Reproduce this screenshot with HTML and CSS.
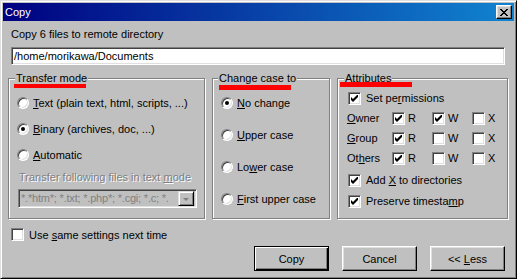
FILE: index.html
```html
<!DOCTYPE html>
<html lang="en">
<head>
  <meta charset="UTF-8" />
  <title>Copy</title>
  <link rel="stylesheet" href="styles.css">
</head>
<body>
  <svg width="0" height="0" class="defs">
    <symbol id="tick" viewBox="0 0 7 7">
      <path d="M0 2 L2 4 L6 0 L7 0 L7 2 L2 7 L0 5 Z" fill="#000"/>
    </symbol>
  </svg>

  <div class="window">
    <div class="titlebar">
      <span class="title">Copy</span>
      <span class="close-btn">
        <svg width="8" height="7" viewBox="0 0 8 7" shape-rendering="crispEdges">
          <path d="M0 0h2v1h1v1h2v-1h1v-1h2v1h-1v1h-1v1h-1v1h1v1h1v1h1v1h-2v-1h-1v-1h-2v1h-1v1h-2v-1h1v-1h1v-1h1v-1h-1v-1h-1v-1h-1z" fill="#000"/>
        </svg>
      </span>
    </div>

    <div class="content">
      <div class="prompt">Copy 6 files to remote directory</div>
      <div class="path-input">/home/morikawa/Documents</div>

      <div class="groups">
        <fieldset class="group group-transfer">
          <legend class="mark-transfer">Transfer mode</legend>
          <div class="option"><span class="radio"></span><span><u>T</u>ext (plain text, html, scripts, ...)</span></div>
          <div class="option"><span class="radio on"></span><span><u>B</u>inary (archives, doc, ...)</span></div>
          <div class="option"><span class="radio"></span><span><u>A</u>utomatic</span></div>
          <div class="disabled-label">Transfer following files in text <u>m</u>ode</div>
          <div class="combo">
            <span class="combo-text">*.*htm*; *.txt; *.php*; *.cgi; *.c; *.</span>
            <span class="combo-btn"><span class="arrow"></span></span>
          </div>
        </fieldset>

        <fieldset class="group group-case">
          <legend class="mark-case">Change case to</legend>
          <div class="case-list">
            <div class="option"><span class="radio on"></span><span><u>N</u>o change</span></div>
            <div class="option"><span class="radio"></span><span><u>U</u>pper case</span></div>
            <div class="option"><span class="radio"></span><span>Lo<u>w</u>er case</span></div>
            <div class="option"><span class="radio"></span><span><u>F</u>irst upper case</span></div>
          </div>
        </fieldset>

        <fieldset class="group group-attr">
          <legend class="mark-attr">Attributes</legend>
          <div class="check-row">
            <span class="check"><svg><use href="#tick"/></svg></span>
            <span>Set pe<u>r</u>missions</span>
          </div>
          <div class="perm-grid">
            <span class="perm-name"><u>O</u>wner</span>
            <span class="perm"><span class="check"><svg><use href="#tick"/></svg></span>R</span>
            <span class="perm"><span class="check"><svg><use href="#tick"/></svg></span>W</span>
            <span class="perm"><span class="check"></span>X</span>

            <span class="perm-name"><u>G</u>roup</span>
            <span class="perm"><span class="check"><svg><use href="#tick"/></svg></span>R</span>
            <span class="perm"><span class="check"></span>W</span>
            <span class="perm"><span class="check"></span>X</span>

            <span class="perm-name">Ot<u>h</u>ers</span>
            <span class="perm"><span class="check"><svg><use href="#tick"/></svg></span>R</span>
            <span class="perm"><span class="check"></span>W</span>
            <span class="perm"><span class="check"></span>X</span>
          </div>
          <div class="check-row add-x">
            <span class="check"><svg><use href="#tick"/></svg></span>
            <span>Add <u>X</u> to directories</span>
          </div>
          <div class="check-row keep-time">
            <span class="check"><svg><use href="#tick"/></svg></span>
            <span>Preserve timesta<u>m</u>p</span>
          </div>
        </fieldset>
      </div>

      <div class="check-row same-settings">
        <span class="check"></span>
        <span>Use <u>s</u>ame settings next time</span>
      </div>

      <div class="buttons">
        <span class="btn default"><span>Copy</span></span>
        <span class="btn"><span>Cancel</span></span>
        <span class="btn"><span>&lt;&lt; <u>L</u>ess</span></span>
      </div>
    </div>
  </div>
</body>
</html>
```

FILE: styles.css
```css
* {
  box-sizing: border-box;
}
body {
  margin: 0;
  background: #c0c0c0;
  font-family: "Liberation Sans", Arial, sans-serif;
  font-size: 11px;
  color: #000;
}
.defs {
  position: absolute;
}
u {
  text-underline-offset: 1px;
}
.window {
  width: 517px;
  height: 279px;
  background: #c0c0c0;
  border: 1px solid;
  border-color: #dfdfdf #000 #000 #dfdfdf;
  box-shadow: inset 1px 1px #fff, inset -1px -1px #808080;
  padding: 2px;
  display: flex;
  flex-direction: column;
}
.titlebar {
  height: 18px;
  flex-shrink: 0;
  background: linear-gradient(to right, #000080, #1084d0);
  display: flex;
  align-items: center;
  justify-content: space-between;
  padding: 0 2px;
  color: #fff;
}
.title {
  font-size: 11px;
}
.close-btn {
  width: 16px;
  height: 14px;
  background: #c0c0c0;
  border: 1px solid;
  border-color: #fff #000 #000 #fff;
  box-shadow: inset -1px -1px #808080, inset 1px 1px #dfdfdf;
  display: flex;
  align-items: center;
  justify-content: center;
}
.content {
  flex: 1;
  padding: 0 6px 0 5px;
  display: flex;
  flex-direction: column;
}
.prompt {
  margin-top: 7px;
  line-height: 13px;
  padding-left: 3px;
}
.path-input {
  margin: 6px 3px 0;
  height: 18px;
  background: #fff;
  border: 1px solid;
  border-color: #808080 #fff #fff #808080;
  box-shadow: inset 1px 1px #404040, inset -1px -1px #dfdfdf;
  padding: 1px 2px 0;
  line-height: 14px;
  white-space: nowrap;
}

/* group boxes */
.groups {
  margin-top: 7px;
  height: 147px;
  display: flex;
  gap: 7px;
}
.group {
  margin: 0;
  min-width: 0;
  border: 1px solid #808080;
  box-shadow: 1px 1px 0 #fff, inset 1px 1px 0 #fff;
  padding: 5px 8px 0;
}
.group legend {
  position: relative;
  padding: 0 1px;
  margin-left: -2px;
  line-height: 13px;
  background: #c0c0c0;
}
.group legend::after {
  content: "";
  position: absolute;
  width: 72px;
  height: 4px;
  background: #ff0000;
}
.mark-transfer::after {
  left: -1px;
  top: 12px;
}
.mark-case::after {
  left: 1px;
  top: 13px;
  height: 5px !important;
}
.mark-attr::after {
  left: -4px;
  top: 10px;
  height: 5px !important;
}
.group-transfer {
  width: 197px;
}
.group-case {
  width: 118px;
}
.group-case legend {
  margin-left: -3px;
}
.group-attr {
  flex: 1;
  padding: 3px 10px 0;
}
.group-attr legend {
  margin-left: -4px;
}

/* radio options */
.option {
  display: flex;
  align-items: center;
  gap: 4px;
  height: 26px;
  white-space: nowrap;
}
.case-list {
  display: flex;
  flex-direction: column;
  gap: 6px;
}
.radio {
  position: relative;
  flex-shrink: 0;
  width: 12px;
  height: 12px;
  border-radius: 50%;
  background: #fff;
  border: 1px solid;
  border-color: #808080 #fff #fff #808080;
  box-shadow: inset 1px 1px #404040, inset -1px -1px #dfdfdf;
}
.radio.on::after {
  content: "";
  position: absolute;
  left: 3px;
  top: 3px;
  width: 4px;
  height: 4px;
  border-radius: 50%;
  background: #000;
}
.disabled-label {
  margin-top: 3px;
  padding-left: 2px;
  line-height: 13px;
  color: #808080;
  text-shadow: 1px 1px 0 #fff;
  white-space: nowrap;
}
.combo {
  margin: 5px 0 0 1px;
  width: 179px;
  height: 19px;
  display: flex;
  align-items: center;
  border: 1px solid;
  border-color: #808080 #fff #fff #808080;
  box-shadow: inset 1px 1px #404040, inset -1px -1px #dfdfdf;
  padding: 2px;
}
.combo-text {
  flex: 1;
  overflow: hidden;
  white-space: nowrap;
  color: #808080;
  line-height: 13px;
  letter-spacing: -0.2px;
}
.combo-btn {
  width: 16px;
  height: 15px;
  flex-shrink: 0;
  background: #c0c0c0;
  border: 1px solid;
  border-color: #dfdfdf #000 #000 #dfdfdf;
  box-shadow: inset 1px 1px #fff, inset -1px -1px #808080;
  display: flex;
  align-items: center;
  justify-content: center;
}
.arrow {
  width: 0;
  height: 0;
  border-left: 3px solid transparent;
  border-right: 3px solid transparent;
  border-top: 3px solid #808080;
  margin-top: 2px;
}

/* checkboxes */
.check-row {
  display: flex;
  align-items: center;
  gap: 5px;
  height: 20px;
  white-space: nowrap;
}
.check {
  flex-shrink: 0;
  width: 13px;
  height: 13px;
  background: #fff;
  border: 1px solid;
  border-color: #808080 #fff #fff #808080;
  box-shadow: inset 1px 1px #404040, inset -1px -1px #dfdfdf;
  display: flex;
  align-items: center;
  justify-content: center;
}
.check svg {
  width: 7px;
  height: 7px;
}
.perm-grid {
  display: grid;
  grid-template-columns: 44px 40px 40px auto;
  grid-auto-rows: 20px;
  align-items: center;
  margin-left: -1px;
}
.perm {
  display: flex;
  align-items: center;
  gap: 3px;
  margin-left: 1px;
}
.add-x {
  margin-top: 2px;
}
.keep-time {
  margin-top: 1px;
}
.same-settings {
  margin-top: 9px;
  height: 13px;
  padding-left: 3px;
}

/* dialog buttons */
.buttons {
  margin-top: 5px;
  display: flex;
  justify-content: flex-end;
  gap: 13px;
  padding-right: 3px;
}
.btn {
  width: 75px;
  height: 25px;
  display: flex;
  align-items: center;
  justify-content: center;
  white-space: pre;
  background: #c0c0c0;
  border: 1px solid;
  border-color: #fff #000 #000 #fff;
  box-shadow: inset -1px -1px #808080, inset 1px 1px #dfdfdf;
}
.btn.default {
  border: 1px solid #000;
  box-shadow: inset 1px 1px #fff, inset -1px -1px #000, inset -2px -2px #808080;
}
```
